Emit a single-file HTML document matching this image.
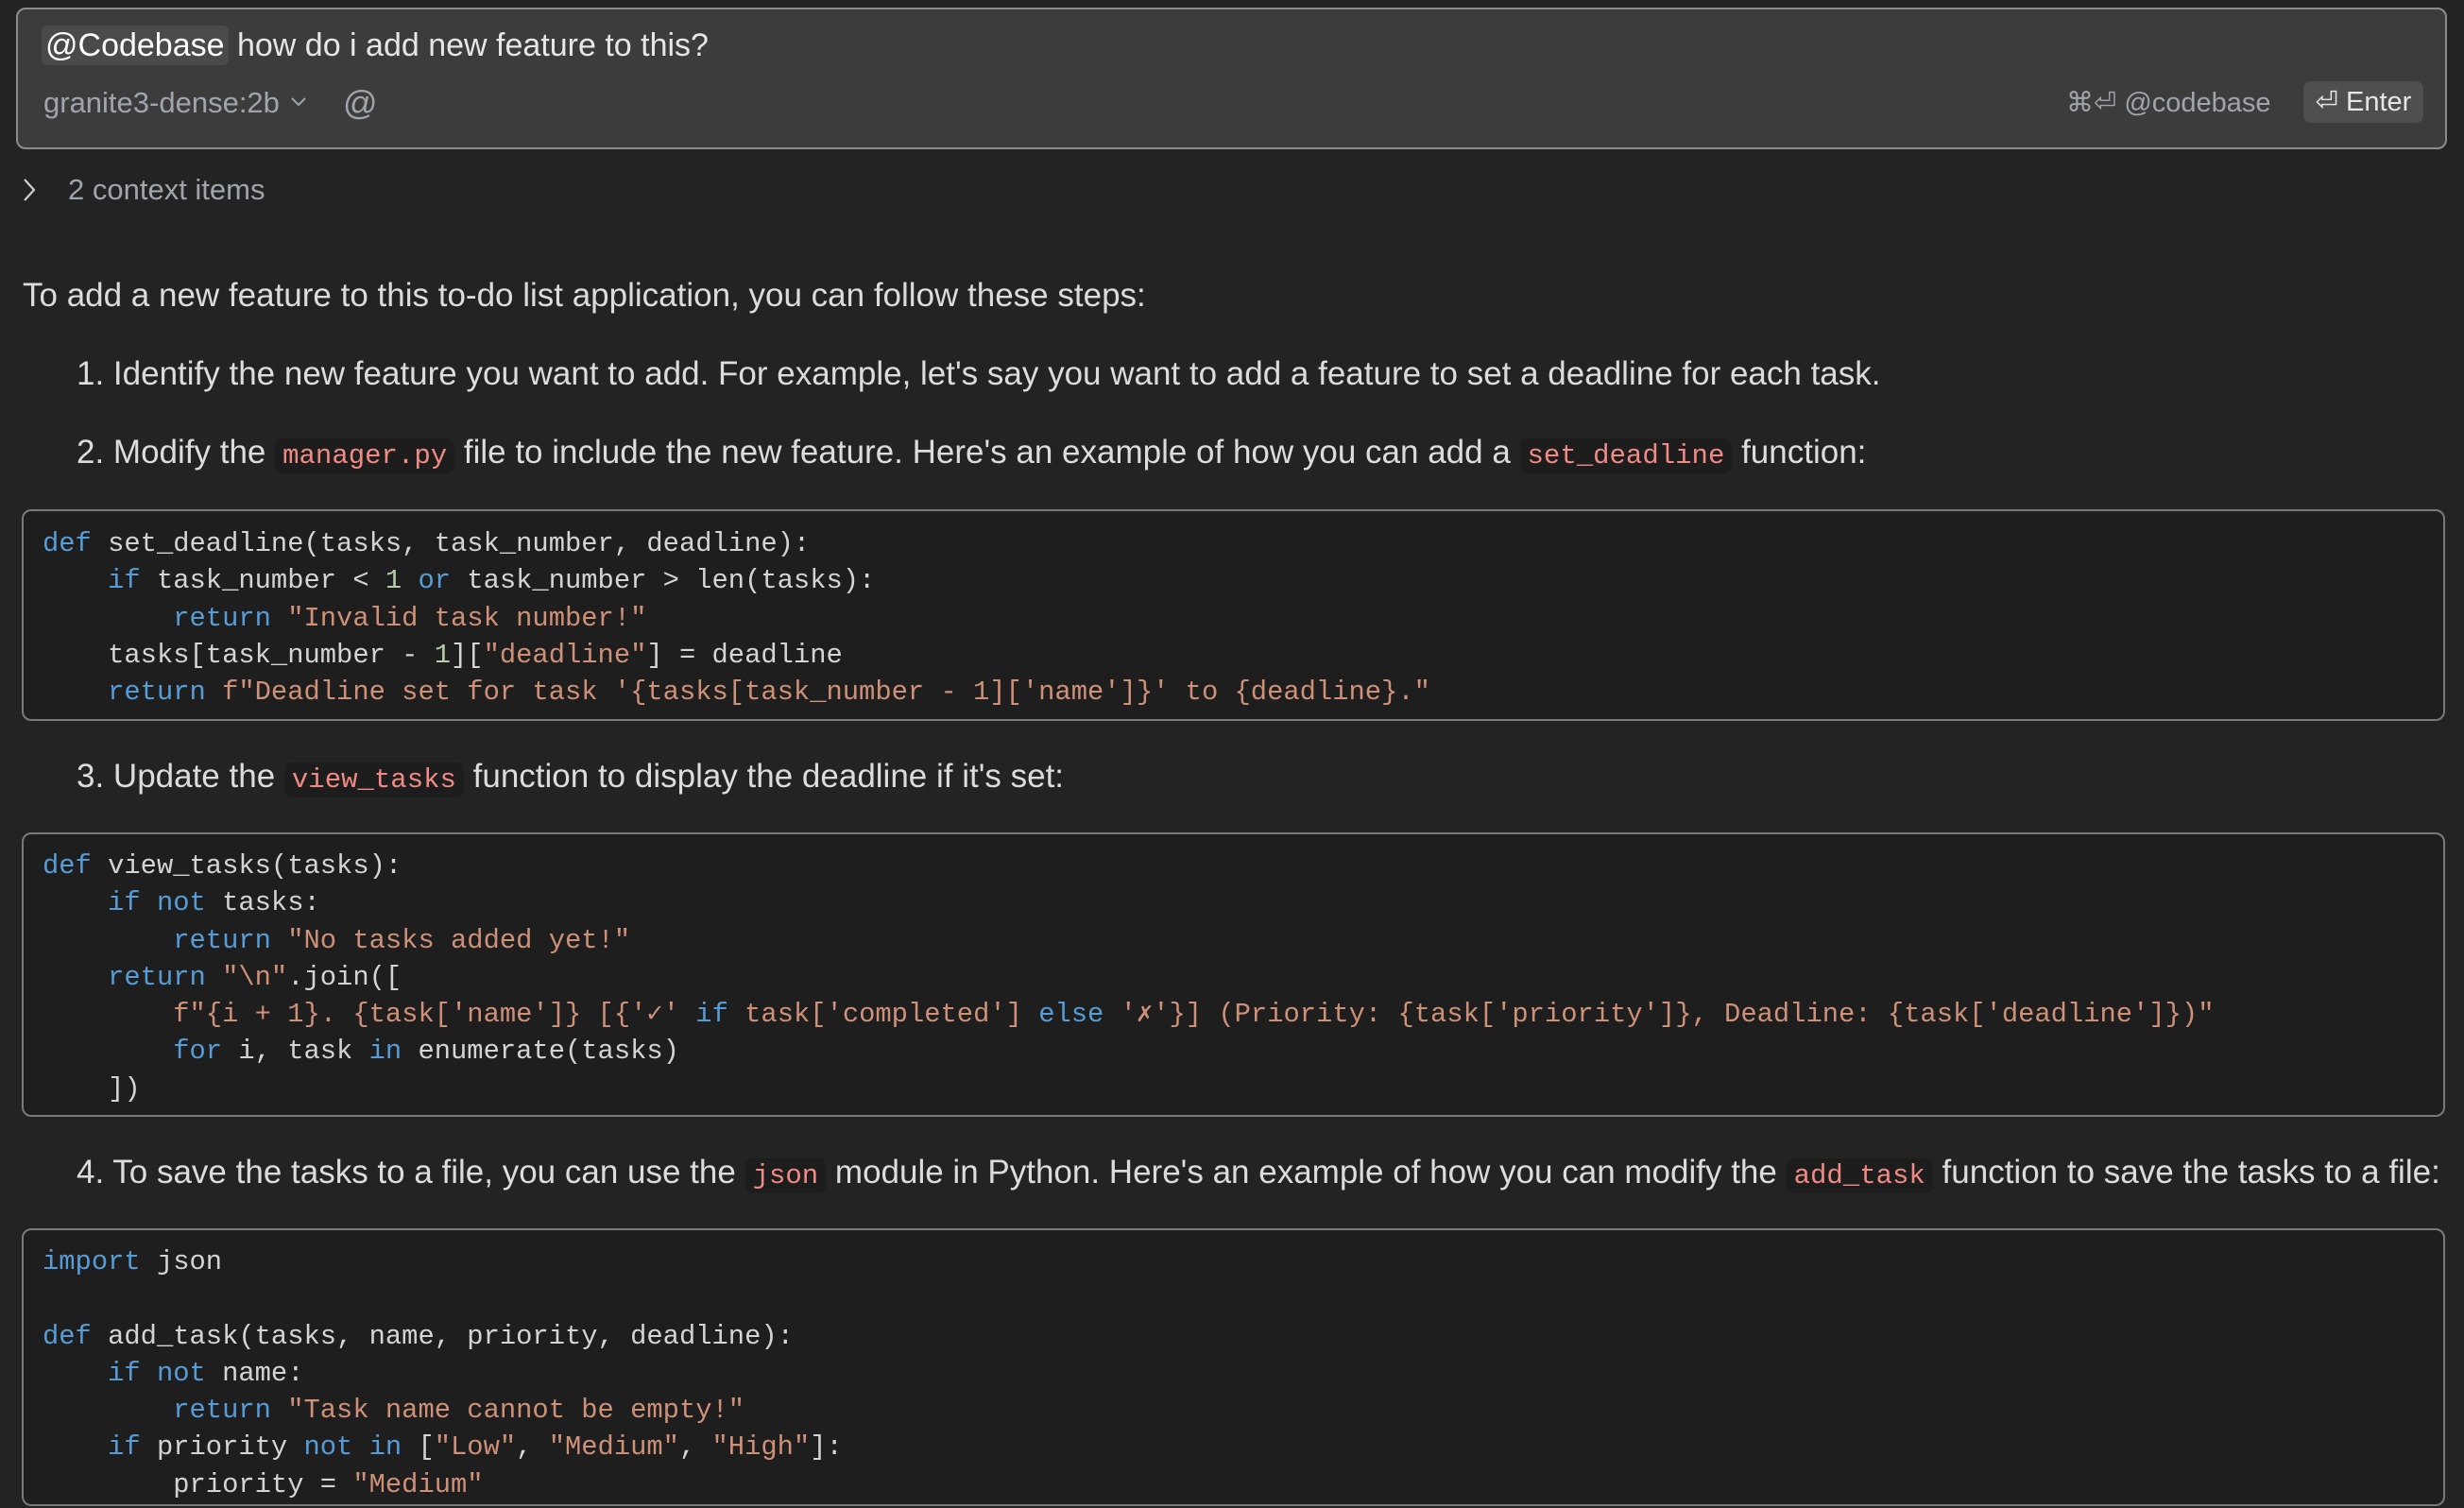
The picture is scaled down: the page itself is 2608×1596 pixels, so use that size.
<!DOCTYPE html>
<html><head><meta charset="utf-8"><style>
html,body{margin:0;padding:0;background:#232323;width:2608px;height:1596px;overflow:hidden;}
body{position:relative;font-family:"Liberation Sans",sans-serif;color:#dcdcdc;}
.abs{position:absolute;white-space:pre;}
.box{position:absolute;left:17px;top:8px;width:2573px;height:150px;background:#3c3c3c;border:2px solid #8c8c8c;border-radius:10px;box-sizing:border-box;}
.t{font-size:35px;line-height:42px;}
.ic{font-family:"Liberation Mono",monospace;font-size:29px;color:#f08a84;background:#1d1d1d;border-radius:8px;padding:2px 8px;}
.code{position:absolute;left:23px;width:2565px;background:#1e1e1e;border:2px solid #7a7a7a;border-radius:10px;box-sizing:border-box;}
.code pre{margin:0;position:absolute;left:20px;font-family:"Liberation Mono",monospace;font-size:28.8px;line-height:39.3px;color:#d4d4d4;}
.k{color:#569cd6}.s{color:#ce9178}.n{color:#b5cea8}
</style></head><body>
<div class="box"></div>
<div class="abs" style="left:44px;top:27px;font-size:34px;line-height:42px;color:#e6e6e6;"><span style="background:#4a4a4a;border-radius:6px;padding:2px 4px;color:#fff;">@Codebase</span> how do i add new feature to this?</div>
<div class="abs" style="left:46px;top:90px;font-size:31px;line-height:38px;color:#a0a4ab;">granite3-dense:2b</div>
<svg class="abs" style="left:306px;top:100px;" width="20" height="14" viewBox="0 0 20 14"><path d="M3 4 L10 11 L17 4" fill="none" stroke="#a0a4ab" stroke-width="2"/></svg>
<div class="abs" style="left:363px;top:88px;font-size:36px;line-height:42px;color:#a0a4ab;">@</div>
<div class="abs" style="left:2187px;top:90px;font-size:29px;line-height:38px;color:#a0a4ab;">⌘⏎ @codebase</div>
<div class="abs" style="left:2438px;top:86px;width:127px;height:44px;background:#4f4f4f;border-radius:8px;font-size:29px;line-height:44px;color:#e6e6e6;text-align:center;">⏎ Enter</div>
<svg class="abs" style="left:22px;top:187px;" width="18" height="28" viewBox="0 0 18 28"><path d="M4 3 L14 14 L4 25" fill="none" stroke="#cfcfcf" stroke-width="2.2"/></svg>
<div class="abs" style="left:72px;top:182px;font-size:31px;line-height:38px;color:#a0a4ab;">2 context items</div>

<div class="abs t" style="left:24px;top:292px;">To add a new feature to this to-do list application, you can follow these steps:</div>
<div class="abs t" style="left:81px;top:375px;">1. Identify the new feature you want to add. For example, let's say you want to add a feature to set a deadline for each task.</div>
<div class="abs t" style="left:81px;top:458px;">2. Modify the <span class="ic">manager.py</span> file to include the new feature. Here's an example of how you can add a <span class="ic">set_deadline</span> function:</div>

<div class="code" style="top:539px;height:224px;"><pre style="top:15px;"><span class="k">def</span> set_deadline(tasks, task_number, deadline):
    <span class="k">if</span> task_number &lt; <span class="n">1</span> <span class="k">or</span> task_number &gt; len(tasks):
        <span class="k">return</span> <span class="s">"Invalid task number!"</span>
    tasks[task_number - <span class="n">1</span>][<span class="s">"deadline"</span>] = deadline
    <span class="k">return</span> <span class="s">f"Deadline set for task '{tasks[task_number - 1]['name']}' to {deadline}."</span></pre></div>

<div class="abs t" style="left:81px;top:801px;">3. Update the <span class="ic">view_tasks</span> function to display the deadline if it's set:</div>

<div class="code" style="top:881px;height:301px;"><pre style="top:14px;"><span class="k">def</span> view_tasks(tasks):
    <span class="k">if</span> <span class="k">not</span> tasks:
        <span class="k">return</span> <span class="s">"No tasks added yet!"</span>
    <span class="k">return</span> <span class="s">"\n"</span>.join([
        <span class="s">f"{i + 1}. {task['name']} [{'✓'</span> <span class="k">if</span> <span class="s">task['completed']</span> <span class="k">else</span> <span class="s">'✗'}] (Priority: {task['priority']}, Deadline: {task['deadline']})"</span>
        <span class="k">for</span> i, task <span class="k">in</span> enumerate(tasks)
    ])</pre></div>

<div class="abs t" style="left:81px;top:1220px;">4. To save the tasks to a file, you can use the <span class="ic">json</span> module in Python. Here's an example of how you can modify the <span class="ic">add_task</span> function to save the tasks to a file:</div>

<div class="code" style="top:1300px;height:294px;"><pre style="top:14px;"><span class="k">import</span> json

<span class="k">def</span> add_task(tasks, name, priority, deadline):
    <span class="k">if</span> <span class="k">not</span> name:
        <span class="k">return</span> <span class="s">"Task name cannot be empty!"</span>
    <span class="k">if</span> priority <span class="k">not</span> <span class="k">in</span> [<span class="s">"Low"</span>, <span class="s">"Medium"</span>, <span class="s">"High"</span>]:
        priority = <span class="s">"Medium"</span></pre></div>
</body></html>
